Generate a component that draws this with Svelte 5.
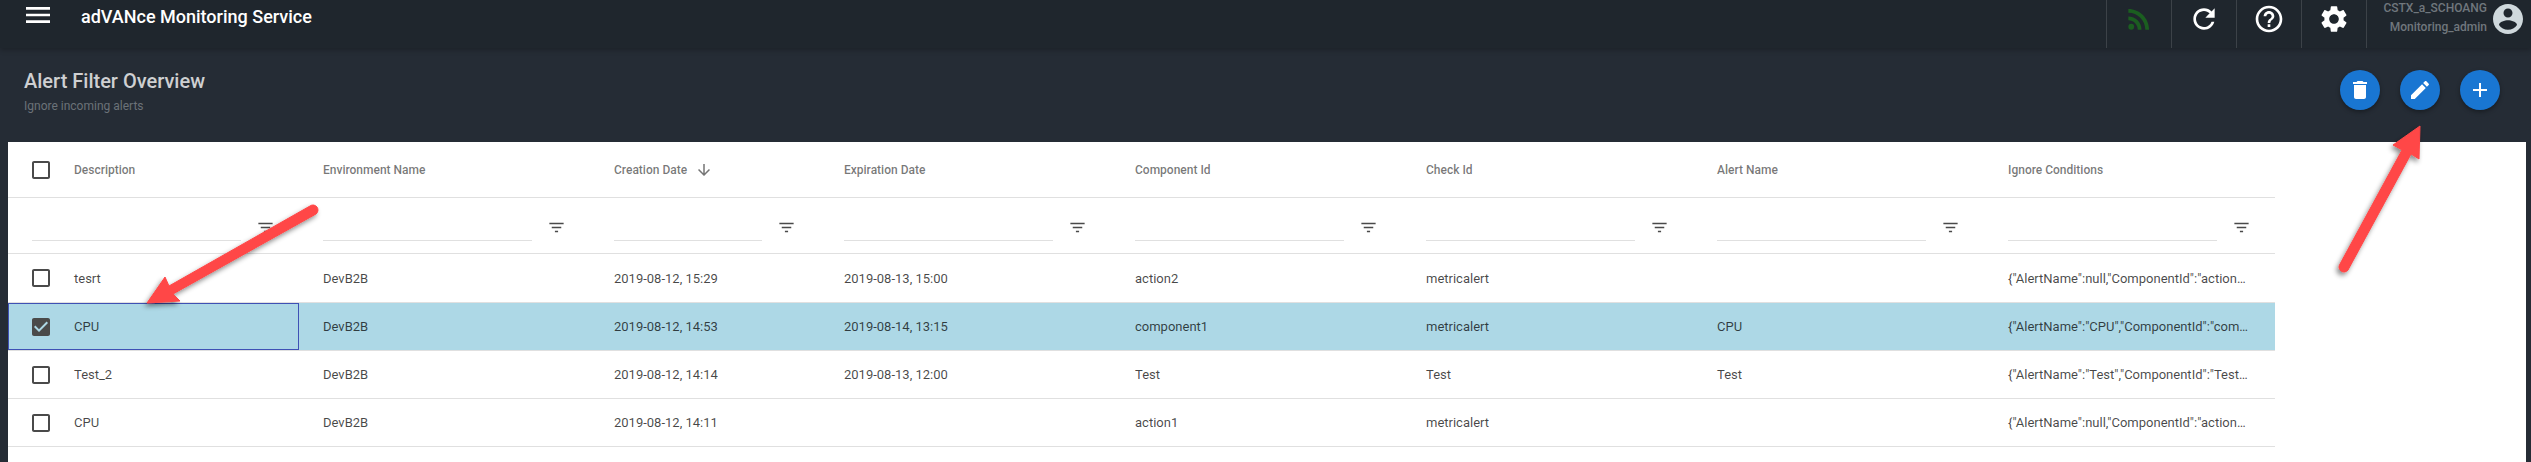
<script>
	const columns = [
		'Description',
		'Environment Name',
		'Creation Date',
		'Expiration Date',
		'Component Id',
		'Check Id',
		'Alert Name',
		'Ignore Conditions'
	]

	const rows = [
		{
			cells: ['tesrt', 'DevB2B', '2019-08-12, 15:29', '2019-08-13, 15:00', 'action2', 'metricalert', '', '{"AlertName":null,"ComponentId":"action…']
		},
		{
			selected: true,
			cells: ['CPU', 'DevB2B', '2019-08-12, 14:53', '2019-08-14, 13:15', 'component1', 'metricalert', 'CPU', '{"AlertName":"CPU","ComponentId":"com…']
		},
		{
			cells: ['Test_2', 'DevB2B', '2019-08-12, 14:14', '2019-08-13, 12:00', 'Test', 'Test', 'Test', '{"AlertName":"Test","ComponentId":"Test…']
		},
		{
			cells: ['CPU', 'DevB2B', '2019-08-12, 14:11', '', 'action1', 'metricalert', '', '{"AlertName":null,"ComponentId":"action…']
		}
	]

	const boxEmpty = 'M19 5v14H5V5h14m0-2H5c-1.1 0-2 .9-2 2v14c0 1.1.9 2 2 2h14c1.1 0 2-.9 2-2V5c0-1.1-.9-2-2-2z'
	const boxChecked = 'M19 3H5c-1.11 0-2 .9-2 2v14c0 1.1.89 2 2 2h14c1.11 0 2-.9 2-2V5c0-1.1-.89-2-2-2zm-9 14l-5-5 1.41-1.41L10 14.17l7.59-7.59L19 8l-9 9z'
</script>

<div class="page">
	<header class="topbar">
		<svg class="menu" viewBox="0 0 24 24"><path d="M3 18h18v-2H3v2zm0-5h18v-2H3v2zm0-7v2h18V6H3z" /></svg>
		<span class="brand">adVANce Monitoring Service</span>
		<div class="tools">
			<div class="tool">
				<svg class="feed" viewBox="0 0 24 24"><circle cx="6.18" cy="17.82" r="2.18" /><path d="M4 4.44v2.83c7.03 0 12.73 5.7 12.73 12.73h2.83c0-8.59-6.97-15.56-15.56-15.56zm0 5.66v2.83c3.9 0 7.07 3.17 7.07 7.07h2.83c0-5.47-4.43-9.9-9.9-9.9z" /></svg>
			</div>
			<div class="tool">
				<svg viewBox="0 0 24 24"><path d="M17.65 6.35C16.2 4.9 14.21 4 12 4c-4.42 0-7.99 3.58-7.99 8s3.57 8 7.99 8c3.73 0 6.84-2.55 7.73-6h-2.08c-.82 2.33-3.04 4-5.65 4-3.31 0-6-2.69-6-6s2.69-6 6-6c1.66 0 3.14.69 4.22 1.78L13 11h7V4l-2.35 2.35z" /></svg>
			</div>
			<div class="tool">
				<svg viewBox="0 0 24 24"><path d="M11 18h2v-2h-2v2zm1-16C6.48 2 2 6.48 2 12s4.48 10 10 10 10-4.48 10-10S17.52 2 12 2zm0 18c-4.41 0-8-3.59-8-8s3.59-8 8-8 8 3.59 8 8-3.59 8-8 8zm0-14c-2.21 0-4 1.79-4 4h2c0-1.1.9-2 2-2s2 .9 2 2c0 2-3 1.75-3 5h2c0-2.25 3-2.5 3-5 0-2.21-1.79-4-4-4z" /></svg>
			</div>
			<div class="tool">
				<svg viewBox="0 0 24 24"><path d="M19.14 12.94c.04-.3.06-.61.06-.94 0-.32-.02-.64-.07-.94l2.03-1.58c.18-.14.23-.41.12-.61l-1.92-3.32c-.12-.22-.37-.29-.59-.22l-2.39.96c-.5-.38-1.03-.7-1.62-.94l-.36-2.54c-.04-.24-.24-.41-.48-.41h-3.84c-.24 0-.43.17-.47.41l-.36 2.54c-.59.24-1.13.57-1.62.94l-2.39-.96c-.22-.08-.47 0-.59.22L2.74 8.87c-.12.21-.08.47.12.61l2.03 1.58c-.05.3-.09.63-.09.94s.02.64.07.94l-2.03 1.58c-.18.14-.23.41-.12.61l1.92 3.32c.12.22.37.29.59.22l2.39-.96c.5.38 1.03.7 1.62.94l.36 2.54c.05.24.24.41.48.41h3.84c.24 0 .44-.17.47-.41l.36-2.54c.59-.24 1.13-.56 1.62-.94l2.39.96c.22.08.47 0 .59-.22l1.92-3.32c.12-.22.07-.47-.12-.61l-2.01-1.58zM12 15.6c-1.98 0-3.6-1.62-3.6-3.6s1.62-3.6 3.6-3.6 3.6 1.62 3.6 3.6-1.62 3.6-3.6 3.6z" /></svg>
			</div>
			<div class="user">
				<div class="names">
					<span>CSTX_a_SCHOANG</span>
					<span>Monitoring_admin</span>
				</div>
				<svg class="avatar" viewBox="0 0 24 24"><path d="M12 2C6.48 2 2 6.48 2 12s4.48 10 10 10 10-4.48 10-10S17.52 2 12 2zm0 3c1.66 0 3 1.34 3 3s-1.34 3-3 3-3-1.34-3-3 1.34-3 3-3zm0 14.2c-2.5 0-4.71-1.28-6-3.22.03-1.99 4-3.08 6-3.08 1.99 0 5.97 1.09 6 3.08-1.29 1.94-3.5 3.22-6 3.22z" /></svg>
			</div>
		</div>
	</header>

	<section class="heading">
		<div>
			<h1>Alert Filter Overview</h1>
			<p>Ignore incoming alerts</p>
		</div>
		<div class="actions">
			<button aria-label="Delete">
				<svg viewBox="0 0 24 24"><path d="M6 19c0 1.1.9 2 2 2h8c1.1 0 2-.9 2-2V7H6v12zM19 4h-3.5l-1-1h-5l-1 1H5v2h14V4z" /></svg>
			</button>
			<button aria-label="Edit">
				<svg viewBox="0 0 24 24"><path d="M3 17.25V21h3.75L17.81 9.94l-3.75-3.75L3 17.25zM20.71 7.04c.39-.39.39-1.02 0-1.41l-2.34-2.34c-.39-.39-1.02-.39-1.41 0l-1.83 1.83 3.75 3.75 1.83-1.83z" /></svg>
			</button>
			<button aria-label="Add">
				<svg viewBox="0 0 24 24"><path d="M19 13h-6v6h-2v-6H5v-2h6V5h2v6h6v2z" /></svg>
			</button>
		</div>
	</section>

	<main class="card">
		<div class="table">
			<div class="row head">
				{#each columns as title, idx}
					<div class="cell">
						{#if idx === 0}
							<svg class="check" viewBox="0 0 24 24"><path d={boxEmpty} /></svg>
						{/if}
						<span>{title}</span>
						{#if idx === 2}
							<svg class="sort" viewBox="0 0 24 24"><path d="M20 12l-1.41-1.41L13 16.17V4h-2v12.17l-5.58-5.59L4 12l8 8 8-8z" /></svg>
						{/if}
					</div>
				{/each}
			</div>
			<div class="row filters">
				{#each columns as title}
					<div class="cell">
						<input type="text" aria-label={title} />
						<svg class="funnel" viewBox="0 0 24 24"><path d="M10 18h4v-2h-4v2zM3 6v2h18V6H3zm3 7h12v-2H6v2z" /></svg>
					</div>
				{/each}
			</div>
			{#each rows as row}
				<div class="row body" class:selected={row.selected}>
					{#each row.cells as value, idx}
						<div class="cell" class:focused={row.selected && idx === 0}>
							{#if idx === 0}
								<svg class="check" viewBox="0 0 24 24"><path d={row.selected ? boxChecked : boxEmpty} /></svg>
							{/if}
							<span class="text">{value}</span>
						</div>
					{/each}
				</div>
			{/each}
		</div>
	</main>

	<svg class="notes" viewBox="0 0 2531 462" aria-hidden="true">
		<defs>
			<filter id="drop" x="-20%" y="-20%" width="140%" height="140%">
				<feDropShadow dx="-2" dy="3" stdDeviation="2.5" flood-color="#000" flood-opacity="0.45" />
			</filter>
		</defs>
		<g filter="url(#drop)" fill="#ff4747" stroke="#ff4747" stroke-linejoin="round">
			<path stroke-width="1" d="M147 303 L165 277 L169 286 L310 206 A4.5 4.5 0 0 1 316 214 L173 294 L180 301 Z" />
			<path stroke-width="1" d="M2420 126 L2393 145 L2402 150 L2340 264 A4.5 4.5 0 0 0 2348 270 L2411 154 L2419 159 Z" />
		</g>
	</svg>
</div>

<style>
	:global(body) {
		margin: 0;
		background: #252c35;
	}

	.page {
		position: relative;
		height: 462px;
		overflow: hidden;
		background: #252c35;
		font-family: Roboto, 'Liberation Sans', sans-serif;
	}

	.topbar {
		position: relative;
		display: flex;
		height: 48px;
		background: #1f262d;
		box-shadow: 0 2px 5px rgba(0, 0, 0, 0.25);
	}

	.menu {
		width: 32px;
		height: 32px;
		margin: -1px 0 0 22px;
		fill: #fff;
	}

	.brand {
		margin: 5px 0 0 27px;
		font-size: 18px;
		font-weight: 500;
		line-height: 24px;
		color: #fff;
	}

	.tools {
		display: flex;
		margin-left: auto;
	}

	.tool {
		display: flex;
		justify-content: center;
		width: 65px;
		height: 48px;
		padding-top: 3px;
		box-sizing: border-box;
		border-left: 1px solid rgba(255, 255, 255, 0.13);
	}

	.tool svg {
		width: 32px;
		height: 32px;
		fill: #fff;
	}

	.tool .feed {
		fill: #1b5e20;
	}

	.user {
		display: flex;
		width: 165px;
		box-sizing: border-box;
		border-left: 1px solid rgba(255, 255, 255, 0.13);
		padding-right: 5px;
		justify-content: flex-end;
	}

	.names {
		display: flex;
		flex-direction: column;
		align-items: flex-end;
		gap: 4px;
		padding-top: 1px;
		font-size: 12px;
		font-weight: 500;
		line-height: 15px;
		color: #70777d;
	}

	.avatar {
		width: 36px;
		height: 36px;
		margin: 1px 0 0 3px;
		fill: #cfd8dc;
	}

	.heading {
		display: flex;
		justify-content: space-between;
		height: 94px;
		padding: 18px 31px 0 24px;
		box-sizing: border-box;
	}

	h1 {
		margin: 3px 0 0;
		font-size: 20px;
		font-weight: 500;
		line-height: 24px;
		color: rgba(255, 255, 255, 0.78);
	}

	p {
		margin: 5px 0 0;
		font-size: 12px;
		line-height: 16px;
		color: #6b7278;
	}

	.actions {
		display: flex;
		gap: 20px;
		padding-top: 4px;
	}

	.actions button {
		display: flex;
		align-items: center;
		justify-content: center;
		width: 40px;
		height: 40px;
		padding: 0;
		border: none;
		border-radius: 50%;
		background: #1976d2;
		box-shadow: 0 2px 4px rgba(0, 0, 0, 0.35);
	}

	.actions svg {
		width: 24px;
		height: 24px;
		fill: #fff;
	}

	.card {
		height: 320px;
		margin: 0 5px 0 8px;
		background: #fff;
	}

	.table {
		width: 2267px;
	}

	.row {
		display: grid;
		grid-template-columns: 291px 291px 230px repeat(5, 291px);
		box-sizing: border-box;
		border-bottom: 1px solid #e0e0e0;
	}

	.cell {
		display: flex;
		align-items: center;
		min-width: 0;
		padding: 0 24px;
		box-sizing: border-box;
	}

	.head {
		height: 56px;
		font-size: 12px;
		font-weight: 500;
		color: rgba(0, 0, 0, 0.54);
	}

	.filters {
		height: 56px;
	}

	.filters input {
		flex: 1;
		min-width: 0;
		height: 30px;
		padding: 0;
		box-sizing: border-box;
		border: none;
		border-bottom: 1px solid #e0e0e0;
		outline: none;
		background: transparent;
	}

	.funnel {
		flex: none;
		width: 19px;
		height: 19px;
		margin: 3px 0 0 15.5px;
		fill: #4a4a4a;
	}

	.body {
		height: 48px;
		font-size: 13px;
		color: rgba(0, 0, 0, 0.72);
	}

	.filters + .body {
		height: 49px;
	}

	.selected {
		background: #add8e6;
	}

	.focused {
		outline: 1px solid #3f51b5;
		outline-offset: -1px;
	}

	.check {
		flex: none;
		width: 24px;
		height: 24px;
		margin: 0 21px 0 -3px;
		fill: #4a4a4a;
	}

	.sort {
		flex: none;
		width: 18px;
		height: 18px;
		margin-left: 8px;
		fill: #757575;
	}

	.text {
		min-width: 0;
		white-space: nowrap;
	}

	.notes {
		position: absolute;
		top: 0;
		left: 0;
		width: 2531px;
		height: 462px;
		pointer-events: none;
	}
</style>
